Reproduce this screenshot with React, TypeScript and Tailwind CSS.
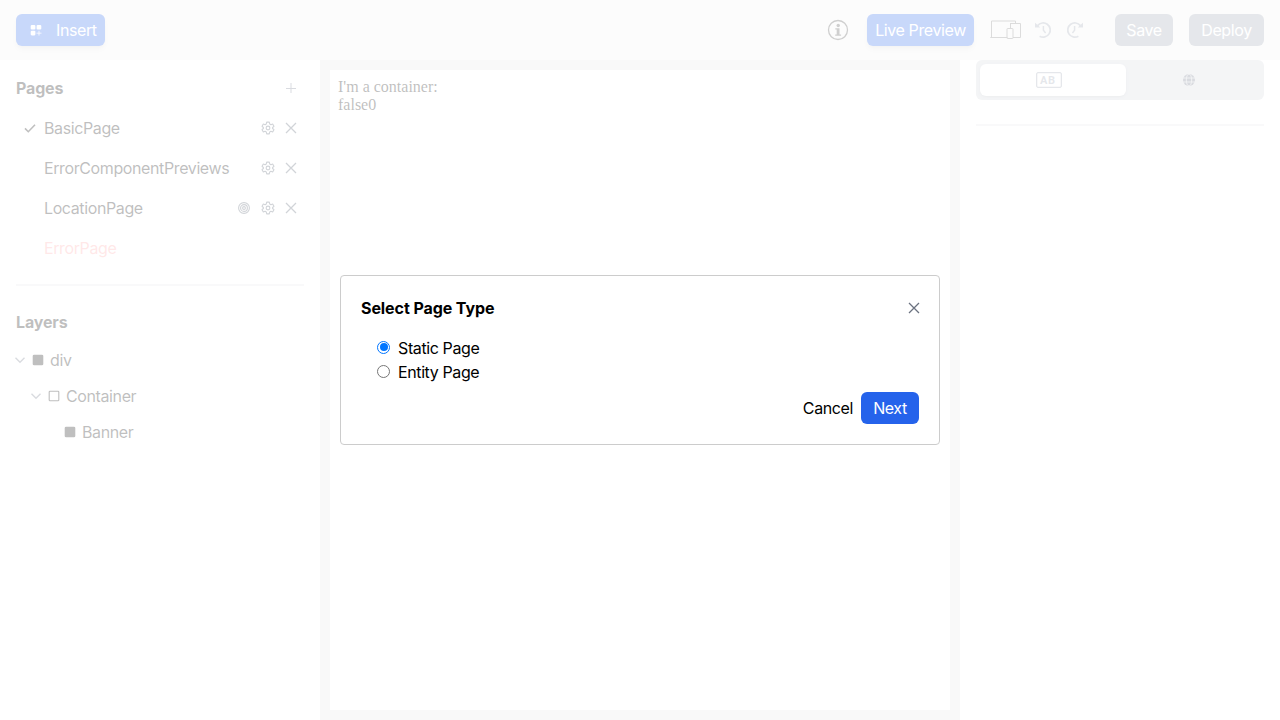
import type { ReactNode } from "react";

const Close = () => (
  <svg className="h-3 w-3 shrink-0" viewBox="0 0 12 12" fill="none" stroke="currentColor" strokeWidth="1.3">
    <path d="M1 1l10 10M11 1L1 11" />
  </svg>
);

const Gear = () => (
  <svg className="h-3.5 w-3.5 shrink-0" viewBox="0 0 24 24" fill="none" stroke="currentColor" strokeWidth="1.9" strokeLinejoin="round">
    <path d="M9.8 2h4.400l.7 3.100 2.100 1.200 3-1 2.200 3.800-2.300 2.100v1.600l2.300 2.100-2.200 3.800-3-1-2.100 1.200-.7 3.100H9.800l-.7-3.100L7 17.700l-3 1-2.200-3.800 2.300-2.100v-1.600L1.800 9.100 4 5.300l3 1 2.100-1.200z" />
    <circle cx="12" cy="12" r="3.200" />
  </svg>
);

const Target = () => (
  <svg className="h-3 w-3 shrink-0" viewBox="0 0 12 12" fill="none" stroke="currentColor" strokeWidth="1.100">
    <circle cx="6" cy="6" r="5.400" />
    <circle cx="6" cy="6" r="3.400" />
    <circle cx="6" cy="6" r="1.400" />
  </svg>
);

const Check = () => (
  <svg className="h-3 w-3" viewBox="0 0 12 12" fill="none" stroke="currentColor" strokeWidth="1.600">
    <path d="M1 6.400l3.300 3.300L11 2.800" />
  </svg>
);

const Chevron = () => (
  <svg className="-ml-px h-2.5 w-2.5" viewBox="0 0 10 10" fill="none" stroke="currentColor" strokeWidth="1.400">
    <path d="M.5 2.800L5 7.300l4.500-4.500" />
  </svg>
);

const FilledBox = () => (
  <svg className="h-3 w-3" viewBox="0 0 12 12"><rect x=".7" y=".7" width="10.600" height="10.600" rx="1.400" fill="currentColor" /></svg>
);

const OutlineBox = () => (
  <svg className="h-3 w-3" viewBox="0 0 12 12"><rect x="1.200" y="1.200" width="9.600" height="9.600" rx=".8" fill="none" stroke="currentColor" strokeWidth="1.100" /></svg>
);

const InsertIcon = () => (
  <svg className="h-3 w-3" viewBox="0 0 12 12" fill="currentColor">
    <rect x=".7" y=".9" width="4.700" height="4.700" rx="1.100" />
    <rect x="6.600" y=".9" width="4.700" height="4.700" rx="1.100" />
    <rect x=".7" y="6.700" width="4.700" height="4.700" rx="1.100" />
    <path d="M8.600 6.700h.8v2h2.100v.8H9.400v2h-.8v-2H6.500v-.8h2.100z" />
  </svg>
);

const Info = () => (
  <svg className="h-[22px] w-[22px] text-neutral-700" viewBox="0 0 22 22" fill="currentColor">
    <circle cx="11" cy="11" r="9.500" fill="none" stroke="currentColor" strokeWidth="1.300" />
    <circle cx="11.200" cy="6.500" r="1.700" />
    <path d="M8.300 9.300h4.200v6.200h1.600v1.200H8.200v-1.200h1.500v-5H8.300z" />
  </svg>
);

const Devices = () => (
  <svg className="h-5 w-8" viewBox="0 0 32 20" fill="none" stroke="currentColor" strokeWidth="1">
    <path d="M1.500 17V1h24v2M.3 17.500h17.200M20.500 8V3.500h10v14h-7.500M20 3.500h1" />
    <rect x="17" y="8.500" width="6" height="10" rx=".5" />
  </svg>
);

const History = ({ flip = false }: { flip?: boolean }) => (
  <svg className={flip ? "h-[18px] w-[18px] -scale-x-100" : "h-[18px] w-[18px]"} viewBox="0 0 18 18" fill="none" stroke="currentColor" strokeWidth="1.700">
    <path d="M3.600 4.600A7.100 7.100 0 1 1 5.600 15.200" />
    <path d="M9.400 5v4.300l2.200 2.600" strokeWidth="1.500" />
    <path d="M1 1.800v4.700h5.200L4.700 4.900 3.400 3.800z" fill="currentColor" stroke="none" />
  </svg>
);

const Globe = () => (
  <svg className="h-3 w-3" viewBox="0 0 12 12">
    <circle cx="6" cy="6" r="6" fill="currentColor" />
    <g fill="none" stroke="#d1d5db" strokeWidth=".9">
      <ellipse cx="6" cy="6" rx="2.700" ry="6" />
      <path d="M0 4h12M0 8h12" />
    </g>
  </svg>
);

const PageRow = ({ name, active, entity }: { name: string; active?: boolean; entity?: boolean }) => (
  <li className="flex h-6 items-center">
    <span className="ml-2 w-5">{active && <Check />}</span>
    <span className="grow">{name}</span>
    <span className="mr-[7px] flex items-center gap-[11px] text-gray-600">
      {entity && <Target />}
      <span className="-mr-px"><Gear /></span>
      <Close />
    </span>
  </li>
);

const Layer = ({ name, className, children, open }: { name: string; className: string; children: ReactNode; open?: boolean }) => (
  <li className={`flex h-9 items-center ${className}`}>
    <span className="w-4 text-gray-500">{open && <Chevron />}</span>
    {children}
    <span className="ml-1.5">{name}</span>
  </li>
);

const Dialog = () => (
  <div className="absolute inset-0 flex items-center justify-center bg-white/75">
    <section className="flex h-[170px] w-[600px] flex-col rounded border border-[#ccc] bg-white p-5 leading-6">
      <header className="flex h-6 items-center justify-between">
        <h2 className="font-bold tracking-[-0.08px]">Select Page Type</h2>
        <span className="-mr-[1px] text-[#6b7280]"><Close /></span>
      </header>
      <div className="mt-4 flex flex-col pl-4">
        <label className="flex h-6 items-center">
          <span className="mb-0.5 mr-2 flex h-[13px] w-[13px] items-center justify-center rounded-full border border-[#0075ff]">
            <span className="h-[8px] w-[8px] rounded-full bg-[#0075ff]" />
          </span>
          Static Page
        </label>
        <label className="flex h-6 items-center">
          <span className="mb-0.5 mr-2 h-[13px] w-[13px] rounded-full border border-[#767676]" />
          Entity Page
        </label>
      </div>
      <footer className="mt-2 flex items-center justify-end gap-2">
        <button>Cancel</button>
        <button className="h-8 w-[58px] rounded-md bg-[#2563eb] text-white">Next</button>
      </footer>
    </section>
  </div>
);

export default function App() {
  return (
    <div className="relative flex h-[720px] w-[1280px] flex-col overflow-hidden bg-white font-['Inter',sans-serif] text-base tracking-[-0.39px] text-black">
      <header className="flex h-[60px] shrink-0 items-center justify-between bg-[#f3f3f3] px-4">
        <button className="flex h-8 w-[89px] items-center rounded-md bg-[#2563eb] pl-3.5 text-white shadow-md">
          <InsertIcon />
          <span className="ml-3.5">Insert</span>
        </button>
        <div className="flex items-center">
          <Info />
          <button className="ml-[18px] h-8 w-[107px] rounded-md bg-[#2563eb] text-white shadow-md">Live Preview</button>
          <span className="ml-4 text-neutral-500"><Devices /></span>
          <span className="ml-3 text-gray-400"><History /></span>
          <span className="ml-[14px] text-gray-400"><History flip /></span>
          <button className="ml-[31px] h-8 w-[58px] rounded-md bg-gray-400 text-white">Save</button>
          <button className="ml-4 h-8 w-[75px] rounded-md bg-gray-400 text-white">Deploy</button>
        </div>
      </header>
      <div className="flex min-h-0 grow">
        <aside className="w-80 px-4 pt-4">
          <div className="flex h-6 items-center justify-between">
            <h2 className="font-bold tracking-[-0.15px]">Pages</h2>
            <svg className="mr-2 h-2.5 w-2.5 text-gray-500" viewBox="0 0 10 10" fill="none" stroke="currentColor"><path d="M5 0v10M0 5.500h10" /></svg>
          </div>
          <ul className="mt-4 flex flex-col gap-4">
            <PageRow name="BasicPage" active />
            <PageRow name="ErrorComponentPreviews" />
            <PageRow name="LocationPage" entity />
            <li className="h-6 pl-7 text-red-300">ErrorPage</li>
          </ul>
          <hr className="mt-6 border-t-2 border-gray-200" />
          <h2 className="mt-6 font-bold tracking-[-0.15px]">Layers</h2>
          <ul className="mt-2">
            <Layer name="div" className="" open><FilledBox /></Layer>
            <Layer name="Container" className="pl-4" open><OutlineBox /></Layer>
            <Layer name="Banner" className="pl-8"><FilledBox /></Layer>
          </ul>
        </aside>
        <main className="w-[640px] bg-[#e6e6e6] p-2.5">
          <div className="h-full bg-white p-2 font-['Liberation_Serif',serif] text-base leading-[18px] tracking-normal">
            <p>I'm a container:</p>
            <p>false0</p>
          </div>
        </main>
        <aside className="w-80 px-4">
          <div className="flex h-10 items-center rounded-md bg-gray-300 p-1">
            <div className="flex h-8 w-[146px] items-center justify-center rounded-md bg-white pr-2 shadow-sm">
              <span className="flex h-4 w-[26px] items-center rounded-[2px] border-[1.5px] border-gray-400 pl-[3px] font-['Roboto',sans-serif] text-[11px] font-bold leading-none tracking-[0.5px] text-gray-400 shadow-[inset_0_0_0_0.3px_#9ca3af]">AB</span>
            </div>
            <div className="flex w-[126px] justify-center text-gray-500"><Globe /></div>
          </div>
          <hr className="mt-6 border-t-2 border-gray-200" />
        </aside>
      </div>
      <Dialog />
    </div>
  );
}
